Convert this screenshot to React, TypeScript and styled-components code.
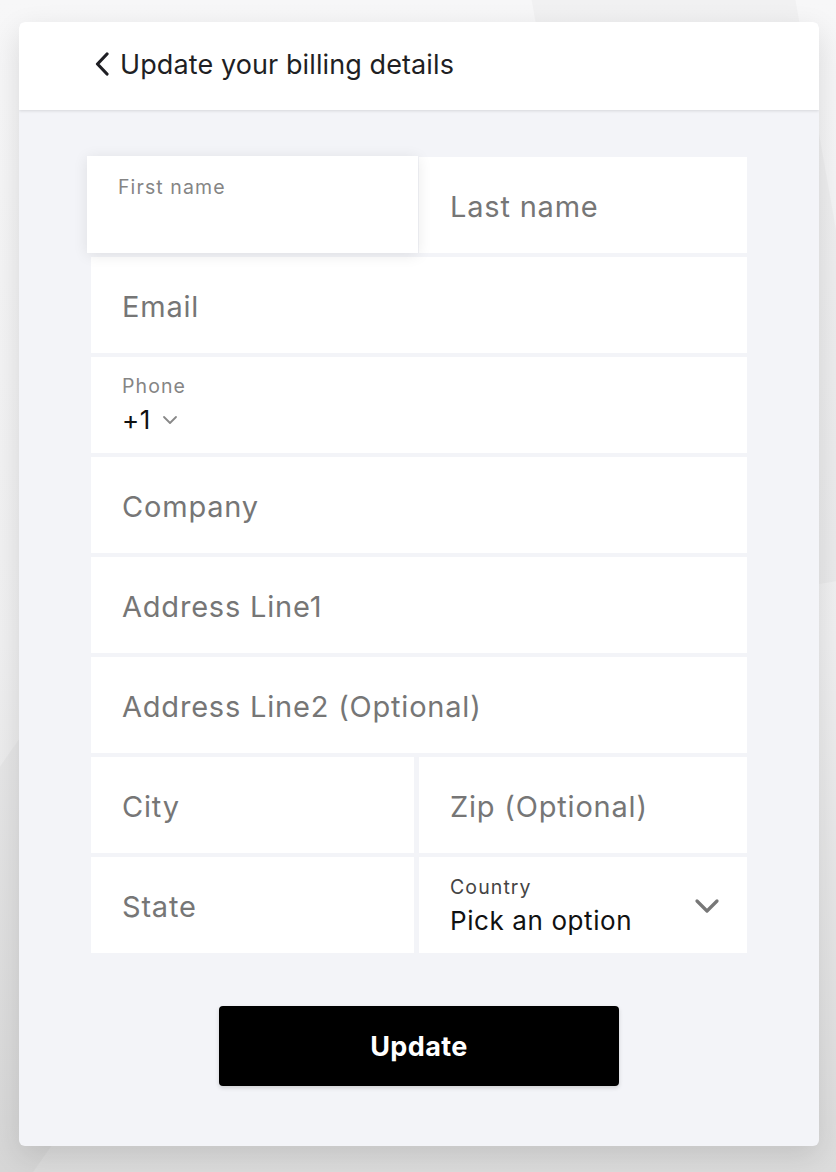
import styled, { createGlobalStyle } from "styled-components";

const GlobalStyle = createGlobalStyle`
    * {
        box-sizing: border-box;
    }
    html, body {
        margin: 0;
        padding: 0;
        height: 100%;
    }
    body {
        font-family: Inter, "Noto Sans", sans-serif;
        background: linear-gradient(180deg, #f7f7f8 0%, #f0f0f1 55%, #dcdcdc 100%);
        overflow: hidden;
    }
`;

const Page = styled.div`
    width: 836px;
    height: 1172px;
    padding: 22px 17px 0 19px;
    position: relative;
    overflow: hidden;
`;

// faint shapes in the backdrop
const Shape = styled.div<{ $left: number; $top: number; $rot: number }>`
    position: absolute;
    left: ${p => p.$left}px;
    top: ${p => p.$top}px;
    width: 260px;
    height: 900px;
    background: rgba(0, 0, 0, 0.025);
    transform: rotate(${p => p.$rot}deg);
`;

const Card = styled.div`
    position: relative;
    width: 800px;
    border-radius: 6px;
    overflow: hidden;
    background-color: #f3f4f8;
    box-shadow: 0 10px 30px rgba(0, 0, 0, 0.12);
`;

const Header = styled.div`
    height: 88px;
    background-color: #fff;
    display: flex;
    align-items: center;
    gap: 11px;
    padding: 0 0 4px 76px;
    box-shadow: 0 1px 3px rgba(0, 0, 0, 0.12);
    position: relative;
`;

const HeaderTitle = styled.h1`
    margin: 0;
    font-size: 27px;
    font-weight: 400;
    color: #1f1f24;
    letter-spacing: 0.1px;
`;

const Body = styled.div`
    padding: 47px 72px 60px 72px;
`;

const Form = styled.div`
    display: grid;
    grid-template-columns: 323px 1fr;
    grid-auto-rows: 96px;
    gap: 4px 5px;
`;

const Field = styled.div<{ $wide?: boolean; $focused?: boolean }>`
    grid-column: ${p => (p.$wide ? "1 / -1" : "auto")};
    background-color: #fff;
    padding: 0 31px;
    display: flex;
    flex-direction: column;
    justify-content: center;
    position: relative;
    ${p =>
        p.$focused &&
        `
        margin: -1px -4px 0 -4px;
        box-shadow: 0 2px 14px rgba(0, 0, 0, 0.09);
        justify-content: flex-start;
        padding-top: 20px;
        z-index: 1;
    `}
`;

const Placeholder = styled.span`
    font-size: 29px;
    color: #767676;
    line-height: 1;
    margin-top: 2px;
    letter-spacing: 0.8px;
`;

const Label = styled.span<{ $dark?: boolean }>`
    font-size: 19.5px;
    color: ${p => (p.$dark ? "#444" : "#858585")};
    line-height: 1.2;
    letter-spacing: 1.1px;
`;

const Value = styled.div`
    display: flex;
    align-items: center;
    gap: 10px;
    font-size: 26px;
    color: #111;
    margin-top: 7px;
    line-height: 1.15;
    letter-spacing: 0.6px;
`;

const SelectRow = styled.div`
    display: flex;
    align-items: center;
    justify-content: space-between;
    margin: 2px -6px 0 0;
`;

const ButtonRow = styled.div`
    display: flex;
    justify-content: center;
    margin-top: 53px;
`;

const UpdateButton = styled.button`
    width: 400px;
    height: 80px;
    border: none;
    border-radius: 4px;
    background-color: #000;
    color: #fff;
    font-family: Inter, Roboto, sans-serif;
    font-size: 27px;
    font-weight: 700;
    letter-spacing: 0.4px;
    box-shadow: 0 2px 4px rgba(0, 0, 0, 0.15);
    cursor: pointer;
`;

function BackChevron() {
    return (
        <svg width={14} height={24} viewBox="0 0 14 24" fill="none">
            <path d="M12 2 L2.5 12 L12 22" stroke="#1f1f24" strokeWidth={3.2} strokeLinecap="round" strokeLinejoin="round" />
        </svg>
    );
}

function DownChevron({ size, color, width }: { size: number; color: string; width: number }) {
    return (
        <svg width={size} height={size} viewBox="0 0 24 24" fill="none">
            <path d="M4 8 L12 16 L20 8" stroke={color} strokeWidth={width} strokeLinecap="round" strokeLinejoin="round" />
        </svg>
    );
}

function App() {
    return (
        <Page>
            <GlobalStyle />
            <Shape $left={560} $top={-300} $rot={-10} />
            <Shape $left={-240} $top={700} $rot={35} />
            <Card>
                <Header>
                    <BackChevron />
                    <HeaderTitle>Update your billing details</HeaderTitle>
                </Header>
                <Body>
                    <Form>
                        <Field $focused>
                            <Label>First name</Label>
                        </Field>
                        <Field>
                            <Placeholder>Last name</Placeholder>
                        </Field>
                        <Field $wide>
                            <Placeholder>Email</Placeholder>
                        </Field>
                        <Field $wide>
                            <Label>Phone</Label>
                            <Value>
                                +1
                                <DownChevron size={18} color="#888" width={2.4} />
                            </Value>
                        </Field>
                        <Field $wide>
                            <Placeholder>Company</Placeholder>
                        </Field>
                        <Field $wide>
                            <Placeholder>Address Line1</Placeholder>
                        </Field>
                        <Field $wide>
                            <Placeholder>Address Line2 (Optional)</Placeholder>
                        </Field>
                        <Field>
                            <Placeholder>City</Placeholder>
                        </Field>
                        <Field>
                            <Placeholder>Zip (Optional)</Placeholder>
                        </Field>
                        <Field>
                            <Placeholder>State</Placeholder>
                        </Field>
                        <Field>
                            <SelectRow>
                                <div>
                                    <Label $dark>Country</Label>
                                    <Value>Pick an option</Value>
                                </div>
                                <DownChevron size={30} color="#777" width={2.6} />
                            </SelectRow>
                        </Field>
                    </Form>
                    <ButtonRow>
                        <UpdateButton>Update</UpdateButton>
                    </ButtonRow>
                </Body>
            </Card>
        </Page>
    );
}

export default App;
